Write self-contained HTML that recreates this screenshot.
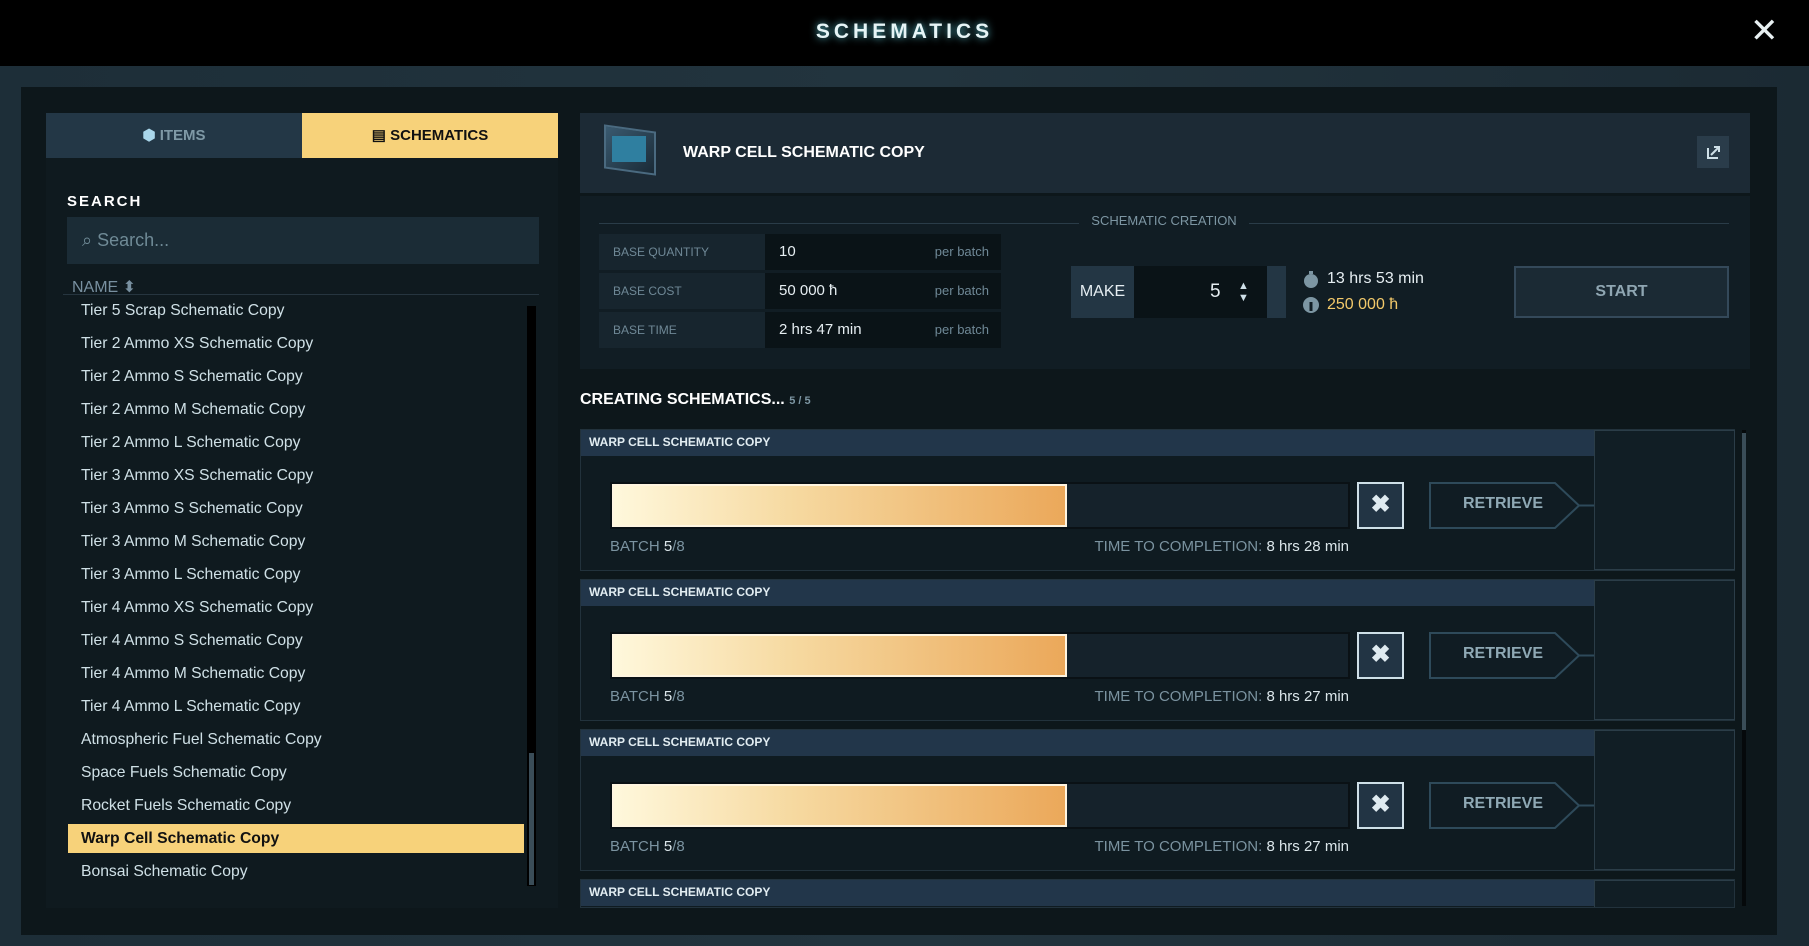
<!DOCTYPE html>
<html><head><meta charset="utf-8"><style>
*{box-sizing:border-box;margin:0;padding:0}
html,body{width:1809px;height:946px;overflow:hidden}
body{background:#1a2a33;font-family:"Liberation Sans",sans-serif;position:relative;color:#dbe6ea}
.a{position:absolute}
.n{font-family:"Liberation Sans Narrow","Liberation Sans",sans-serif}
.top{left:0;top:0;width:1809px;height:66px;background:#000}
.title{left:0;top:20px;width:1809px;text-align:center;font-size:21px;font-weight:bold;letter-spacing:4px;color:#e6f4f6;text-shadow:0 0 8px #5fc8d8}
.bg{left:0;top:66px;width:1809px;height:880px;background:linear-gradient(90deg,#1d2e38,#22343e 50%,#1b2a33)}
.main{left:21px;top:87px;width:1756px;height:848px;background:#0d171b}
.list div{position:absolute;left:81px;font-size:15.7px;color:#cfe0e6}
.card{position:absolute;left:580px;width:1155px;height:142px;background:#0f1b21;border:1px solid #22323c}
.ch{position:absolute;left:0;top:0;width:1013px;height:26px;background:#22364a;font-size:12px;font-weight:bold;color:#e2edf2;padding:5px 8px;font-family:"Liberation Sans Narrow","Liberation Sans",sans-serif}
.sq{position:absolute;left:1013px;top:0;width:141px;height:140px;background:#111e25;border:1px solid #2b3d48}
.bar{position:absolute;left:29px;top:52px;width:740px;height:47px;background:#15222b;border:2px solid #0a1115}
.fill{position:absolute;left:0;top:0;width:455px;height:43px;background:linear-gradient(90deg,#fff8dc,#f6d9a0 40%,#eba85a);border:2px solid #fff5e0}
.xb{position:absolute;left:776px;top:52px;width:47px;height:47px;background:#223444;border:2px solid #cfe0e8;color:#dfeaf0;font-size:24px;font-weight:bold;text-align:center;line-height:42px}
.rt{position:absolute;left:848px;top:52px;width:165px;height:47px}
.rt span{position:absolute;left:34px;top:13px;color:#8fa9b5;font-size:16px;font-weight:bold}
.bt{position:absolute;left:29px;top:108px;font-size:15px;color:#7b93a0}
.tt{position:absolute;right:385px;top:108px;font-size:15px;color:#7b93a0}
.bt b,.tt b{color:#dbe6ea;font-weight:normal}
.row{position:absolute;left:599px;width:402px;height:36px;background:#0a1317}
.row .l{position:absolute;left:0;top:0;width:166px;height:36px;background:#17252e;font-size:12px;color:#6f8896;padding:11px 14px}
.row .v{position:absolute;left:180px;top:9px;font-size:15px;color:#e6eef2}
.row .p{position:absolute;right:12px;top:10px;font-size:13px;color:#6f8896}
</style></head><body>
<div class="a top"></div>
<div class="a title">SCHEMATICS</div>
<div class="a" style="left:1750px;top:14px;font-size:34px;color:#e8f0f2;line-height:34px">✕</div>
<div class="a bg"></div>
<div class="a main"></div>
<div class="a" style="left:46px;top:113px;width:512px;height:795px;background:#0f1a1f"></div>
<div class="a" style="left:46px;top:113px;width:256px;height:45px;background:#233746;color:#7f99a6;font-weight:bold;font-size:15px;text-align:center;line-height:45px"><span style="color:#a9d6ea">⬢</span> ITEMS</div>
<div class="a" style="left:302px;top:113px;width:256px;height:45px;background:#f7d27a;color:#111;font-weight:bold;font-size:15px;text-align:center;line-height:45px">▤ SCHEMATICS</div>
<div class="a" style="left:67px;top:193px;font-size:15px;font-weight:bold;letter-spacing:2px;color:#fff">SEARCH</div>
<div class="a" style="left:67px;top:217px;width:472px;height:47px;background:#1b2c36;color:#6f8a96;font-size:18px;padding:13px 15px">⌕ Search...</div>
<div class="a" style="left:72px;top:277px;font-size:16px;color:#7890a0">NAME ⬍</div>
<div class="a" style="left:63px;top:294px;width:476px;height:1px;background:#26353f"></div>
<div class="a" style="left:527px;top:306px;width:9px;height:580px;background:#000"></div>
<div class="a" style="left:529px;top:753px;width:5px;height:132px;background:#3a4d58"></div>
<div class="a" style="left:68px;top:824px;width:456px;height:29px;background:#f7d27a"></div>
<div class="list">
<div style="top:302px">Tier 5 Scrap Schematic Copy</div>
<div style="top:335px">Tier 2 Ammo XS Schematic Copy</div>
<div style="top:368px">Tier 2 Ammo S Schematic Copy</div>
<div style="top:401px">Tier 2 Ammo M Schematic Copy</div>
<div style="top:434px">Tier 2 Ammo L Schematic Copy</div>
<div style="top:467px">Tier 3 Ammo XS Schematic Copy</div>
<div style="top:500px">Tier 3 Ammo S Schematic Copy</div>
<div style="top:533px">Tier 3 Ammo M Schematic Copy</div>
<div style="top:566px">Tier 3 Ammo L Schematic Copy</div>
<div style="top:599px">Tier 4 Ammo XS Schematic Copy</div>
<div style="top:632px">Tier 4 Ammo S Schematic Copy</div>
<div style="top:665px">Tier 4 Ammo M Schematic Copy</div>
<div style="top:698px">Tier 4 Ammo L Schematic Copy</div>
<div style="top:731px">Atmospheric Fuel Schematic Copy</div>
<div style="top:764px">Space Fuels Schematic Copy</div>
<div style="top:797px">Rocket Fuels Schematic Copy</div>
<div style="top:830px;color:#111;font-weight:bold">Warp Cell Schematic Copy</div>
<div style="top:863px">Bonsai Schematic Copy</div>
</div>
<div class="a" style="left:580px;top:113px;width:1170px;height:80px;background:#1c2a35"></div>
<div class="a" style="left:604px;top:128px;width:52px;height:44px;background:linear-gradient(135deg,#3a5a70,#1a2a36);border:2px solid #4a6a80;transform:skewY(8deg)"></div>
<div class="a" style="left:612px;top:136px;width:34px;height:26px;background:#2f7fa0"></div>
<div class="a n" style="left:683px;top:144px;font-size:16px;font-weight:bold;color:#fff">WARP CELL SCHEMATIC COPY</div>
<div class="a" style="left:1697px;top:136px;width:32px;height:32px;background:#2a3c4a"><svg width="32" height="32"><path d="M11 12v10h10M14 19l8-8M17 11h5v5" fill="none" stroke="#cfe0e8" stroke-width="2"/></svg></div>
<div class="a" style="left:580px;top:196px;width:1170px;height:173px;background:#111d24"></div>
<div class="a" style="left:599px;top:223px;width:480px;height:1px;background:#2a3c48"></div>
<div class="a" style="left:1249px;top:223px;width:480px;height:1px;background:#2a3c48"></div>
<div class="a n" style="left:1079px;top:213px;width:170px;text-align:center;font-size:13px;color:#7d96a3">SCHEMATIC CREATION</div>
<div class="row n" style="top:234px"><div class="l">BASE QUANTITY</div><div class="v">10</div><div class="p">per batch</div></div>
<div class="row n" style="top:273px"><div class="l">BASE COST</div><div class="v">50 000 ħ</div><div class="p">per batch</div></div>
<div class="row n" style="top:312px"><div class="l">BASE TIME</div><div class="v">2 hrs 47 min</div><div class="p">per batch</div></div>
<div class="a n" style="left:1071px;top:266px;width:215px;height:52px;background:#0a1317"></div>
<div class="a n" style="left:1071px;top:266px;width:63px;height:52px;background:#233644;color:#e6eef2;font-size:16px;line-height:52px;text-align:center">MAKE</div>
<div class="a" style="left:1267px;top:266px;width:19px;height:52px;background:#233644"></div>
<div class="a n" style="left:1210px;top:281px;font-size:19px;color:#e6eef2">5</div>
<div class="a" style="left:1238px;top:280px;font-size:11px;line-height:12px;color:#cfe0e8">▲<br>▼</div>
<div class="a" style="left:1302px;top:270px"><svg width="18" height="20"><circle cx="9" cy="11" r="7" fill="#7d96a3"/><rect x="7" y="1" width="4" height="3" fill="#7d96a3"/></svg></div>
<div class="a n" style="left:1327px;top:270px;font-size:16px;color:#e6eef2">13 hrs 53 min</div>
<div class="a" style="left:1302px;top:295px"><svg width="18" height="20"><circle cx="9" cy="10" r="8" fill="#7d96a3"/><rect x="7.5" y="7" width="3" height="9" fill="#111d24"/></svg></div>
<div class="a n" style="left:1327px;top:296px;font-size:16px;color:#f3c96a">250 000 ħ</div>
<div class="a n" style="left:1514px;top:266px;width:215px;height:52px;background:#1b2a34;border:2px solid #34495a;color:#8fa6b2;font-size:16px;font-weight:bold;text-align:center;line-height:48px">START</div>
<div class="a n" style="left:580px;top:391px;font-size:16px;font-weight:bold;color:#fff">CREATING SCHEMATICS... <span style="font-size:11px;color:#7d96a3">5 / 5</span></div>
<div class="a" style="left:1742px;top:430px;width:4px;height:476px;background:#05090b"></div>
<div class="a" style="left:1742px;top:433px;width:4px;height:297px;background:#3a4d58"></div>
<div class="card" style="top:429px"><div class="ch">WARP CELL SCHEMATIC COPY</div><div class="sq"></div><div class="bar"><div class="fill"></div></div><div class="xb">✖</div><div class="rt n"><svg width="165" height="47"><path d="M1 1H126L150 23.5L126 46H1Z" fill="#101c23" stroke="#2e4a5a" stroke-width="2"/><path d="M150 23.5H165" stroke="#2e4a5a" stroke-width="2"/></svg><span>RETRIEVE</span></div><div class="bt n">BATCH <b>5</b>/8</div><div class="tt n">TIME TO COMPLETION: <b>8 hrs 28 min</b></div></div>
<div class="card" style="top:579px"><div class="ch">WARP CELL SCHEMATIC COPY</div><div class="sq"></div><div class="bar"><div class="fill"></div></div><div class="xb">✖</div><div class="rt n"><svg width="165" height="47"><path d="M1 1H126L150 23.5L126 46H1Z" fill="#101c23" stroke="#2e4a5a" stroke-width="2"/><path d="M150 23.5H165" stroke="#2e4a5a" stroke-width="2"/></svg><span>RETRIEVE</span></div><div class="bt n">BATCH <b>5</b>/8</div><div class="tt n">TIME TO COMPLETION: <b>8 hrs 27 min</b></div></div>
<div class="card" style="top:729px"><div class="ch">WARP CELL SCHEMATIC COPY</div><div class="sq"></div><div class="bar"><div class="fill"></div></div><div class="xb">✖</div><div class="rt n"><svg width="165" height="47"><path d="M1 1H126L150 23.5L126 46H1Z" fill="#101c23" stroke="#2e4a5a" stroke-width="2"/><path d="M150 23.5H165" stroke="#2e4a5a" stroke-width="2"/></svg><span>RETRIEVE</span></div><div class="bt n">BATCH <b>5</b>/8</div><div class="tt n">TIME TO COMPLETION: <b>8 hrs 27 min</b></div></div>
<div class="card" style="top:879px;height:29px;overflow:hidden"><div class="ch">WARP CELL SCHEMATIC COPY</div><div class="sq"></div></div>
</body></html>
